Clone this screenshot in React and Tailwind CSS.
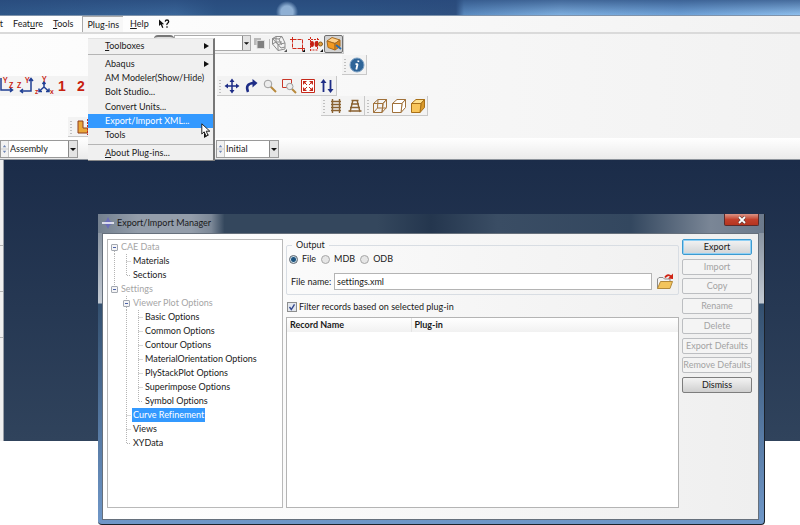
import React from 'react';

const menus = ['Feature', 'Tools', 'Plug-ins', 'Help'];

const pluginItems = [
    { label: 'Toolboxes', hot: 0, sub: true },
    { separator: true },
    { label: 'Abaqus', sub: true },
    { label: 'AM Modeler(Show/Hide)' },
    { label: 'Bolt Studio...' },
    { label: 'Convert Units...' },
    { label: 'Export/Import XML...', active: true },
    { label: 'Tools', sub: true },
    { separator: true },
    { label: 'About Plug-ins...', hot: 0 },
];

// guides: B/E/M = expander, V = vertical line, T = branch, L = last branch, - = blank
const treeRows = [
    { guides: 'B', label: 'CAE Data', muted: true },
    { guides: 'VT', label: 'Materials' },
    { guides: 'VL', label: 'Sections' },
    { guides: 'E', label: 'Settings', muted: true },
    { guides: '-M', label: 'Viewer Plot Options', muted: true },
    { guides: '-VT', label: 'Basic Options' },
    { guides: '-VT', label: 'Common Options' },
    { guides: '-VT', label: 'Contour Options' },
    { guides: '-VT', label: 'MaterialOrientation Options' },
    { guides: '-VT', label: 'PlyStackPlot Options' },
    { guides: '-VT', label: 'Superimpose Options' },
    { guides: '-VL', label: 'Symbol Options' },
    { guides: '-T', label: 'Curve Refinement', selected: true },
    { guides: '-T', label: 'Views' },
    { guides: '-L', label: 'XYData' },
];

const actions = [
    { label: 'Export', primary: true },
    { label: 'Import', disabled: true },
    { label: 'Copy', disabled: true },
    { label: 'Rename', disabled: true },
    { label: 'Delete', disabled: true },
    { label: 'Export Defaults', disabled: true },
    { label: 'Remove Defaults', disabled: true },
    { label: 'Dismiss' },
];

const guidePaths = {
    V: 'M6.5 0V14',
    T: 'M6.5 0V14M6.5 7.5H11',
    L: 'M6.5 0V7.5H11',
    B: 'M6.5 11V14',
    E: 'M6.5 0V4',
    M: 'M6.5 0V4M6.5 11V14',
    '-': '',
};

const Guide = ({ kind }) => (
    <svg className="h-3.5 w-3 shrink-0" viewBox="0 0 12 14" fill="none">
        <path d={guidePaths[kind]} stroke="#b4b4b4" strokeDasharray="1 1" />
        {'BEM'.includes(kind) && (
            <>
                <rect x="3.5" y="4.5" width="6" height="6" rx="0.5" fill="#f4f4f6" stroke="#a3a8b0" />
                <path d="M5 7.5H8" stroke="#4b62a8" />
            </>
        )}
    </svg>
);

const Hot = ({ text, index }) => (
    <span>
        {text.slice(0, index)}
        <u className="underline-offset-1">{text[index]}</u>
        {text.slice(index + 1)}
    </span>
);

const Grip = () => (
    <svg className="h-3.5 w-1 shrink-0" viewBox="0 0 4 14">
        <path d="M2 1V14" stroke="#8d8d8d" strokeWidth="1" strokeDasharray="1 2" />
    </svg>
);

const ToolGroup = ({ children }) => (
    <div className="flex h-5 items-center gap-px border-r border-b border-[#c9c9c9] bg-[#f3f3f3] pl-px">
        <Grip />
        {children}
    </div>
);

const Tool = ({ label, pressed, children }) => (
    <button
        type="button"
        aria-label={label}
        className={
            pressed
                ? 'flex h-[18px] w-[19px] items-center justify-center rounded-xs border border-[#6f6f6f] bg-[#d2d2d2]'
                : 'flex h-[18px] w-[18px] items-center justify-center'
        }
    >
        <svg className="h-4 w-4 shrink-0" viewBox="0 0 16 16" fill="none">
            {children}
        </svg>
    </button>
);

const Cube = ({ front, top, side, stroke, wire }) => (
    <g stroke={stroke} strokeLinejoin="round">
        <path d="M1.5 5.5L6 1.5H14.5L11 5.5Z" fill={top} />
        <path d="M11 5.5L14.5 1.5V9.5L10 14.5Z" fill={side} />
        <path d="M1.5 5.5H11L10 14.5H1.5Z" fill={front} />
        {wire && <path d="M6 1.5L5.5 10H14.5M5.5 10L1.5 14.5" />}
    </g>
);

const Combo = ({ label, value, className }) => (
    <div className={`flex h-[18px] items-stretch border border-[#9a9a9a] bg-white ${className}`}>
        <svg className="h-4 w-2 shrink-0 border-r border-[#c6c6c6] bg-[#f2f2f2]" viewBox="0 0 8 16">
            <path d="M2 6L4 3.5L6 6ZM2 10L4 12.5L6 10Z" fill="#6f86b5" />
            <path d="M0 8H8" stroke="#c6c6c6" />
        </svg>
        <select aria-label={label} className="min-w-0 flex-1 appearance-none bg-white pl-px outline-none">
            <option>{value}</option>
        </select>
        <svg className="h-4 w-[9px] shrink-0 border-l border-[#8a8a8a] bg-[#e4e4e4]" viewBox="0 0 8 16">
            <path d="M1 7H7L4 10Z" fill="#111" />
        </svg>
    </div>
);

const MenuBar = () => (
    <nav className="flex h-[18px] items-center border-b-2 border-[#dadada] bg-linear-to-r from-white to-[#f2f2f2]">
        <button type="button" className="mr-[5px] flex w-[3px] justify-end">t</button>
        {menus.map((name) => (
            <button
                key={name}
                type="button"
                className={
                    name === 'Plug-ins'
                        ? 'mr-0.5 ml-1 h-4 border-t border-l border-[#a9a9a9] bg-[#f7f7f7] px-1'
                        : 'h-4 px-[5px]'
                }
            >
                <Hot text={name} index={name === 'Feature' ? 4 : name === 'Plug-ins' ? 3 : 0} />
            </button>
        ))}
        <button type="button" aria-label="What's this" className="pl-1">
            <svg className="h-2.5 w-3" viewBox="0 0 12 10">
                <path d="M1 0.5V7L2.7 5.6L4.2 9L5.4 8.4L4 5.2H6.2Z" fill="#111" />
                <path d="M7.2 2.7Q7.4 1 9 1T10.7 2.6Q10.7 3.6 9.6 4.3T9 6M9 7.3V8.8" fill="none" stroke="#111" strokeWidth="1.3" />
            </svg>
        </button>
    </nav>
);

const PluginMenu = () => (
    <div role="menu" className="absolute top-[38px] left-[88px] flex h-[123px] w-[127px] flex-col border-t border-r-2 border-b border-t-[#e2e2e2] border-r-[#777] border-b-[#888] bg-[#f0f0f0]">
        {pluginItems.map((item, i) =>
            item.separator ? (
                <hr key={i} className="my-px border-t border-[#b5b5b5]" />
            ) : (
                <button
                    key={item.label}
                    type="button"
                    role="menuitem"
                    className={
                        item.active
                            ? 'flex flex-1 items-center justify-between bg-[#3399ff] pr-1 pl-[17px] text-white'
                            : 'flex flex-1 items-center justify-between pr-1 pl-[17px]'
                    }
                >
                    {item.hot === 0 ? <Hot text={item.label} index={0} /> : <span>{item.label}</span>}
                    {item.sub && (
                        <svg className="h-1.5 w-[5px]" viewBox="0 0 5 6">
                            <path d="M0 0L5 3L0 6Z" fill="#111" />
                        </svg>
                    )}
                </button>
            )
        )}
    </div>
);

const ViewIcons = () => (
    <div className="flex h-5 items-center bg-[#f3f3f3] text-[#c8200e]">
        <svg className="h-5 w-[54px] overflow-visible" viewBox="0 0 54 20" fill="none">
            <g stroke="#1f3f94" strokeWidth="1.5">
                <path d="M1 2V14H12M10 12L12.5 14L10 16" />
                <path d="M31 3V15H21M29 5L31 2.5L33 5M23 13L20.5 15L23 17" />
                <path d="M44 6V11L39.5 15M44 11L48.5 15M42.5 8L44 6L45.5 8M39 12.5V15.5H42M49 12.5V15.5H46" />
            </g>
            <g fill="#c8200e" fontSize="7" fontWeight="700">
                <text x="3" y="7">Y</text>
                <text x="9" y="12">Z</text>
                <text x="17" y="12">Z</text>
                <text x="25" y="7">Y</text>
                <text x="42" y="6">Y</text>
                <text x="35" y="18">z</text>
                <text x="50" y="18">x</text>
            </g>
        </svg>
        <button type="button" className="w-4 text-sm leading-5 font-bold font-['Liberation_Sans',sans-serif]">1</button>
        <button type="button" className="ml-[3px] w-4 text-sm leading-5 font-bold font-['Liberation_Sans',sans-serif]">2</button>
    </div>
);

const Toolbars = () => (
    <div className="flex flex-col bg-linear-to-r from-[#fdfdfd] to-[#f2f2f2]">
        <div className="flex h-[21px] items-start pt-px pl-[154px]">
            <div className="h-[18px] w-5 rounded-t-sm border-t-2 border-[#777] bg-[#ddd]" />
            <div className="flex h-[19px] border-r border-b border-[#c9c9c9] bg-[#f3f3f3]">
                <div className="flex h-4 w-[77px] border border-[#aaa] bg-white">
                    <select aria-label="Field output" className="min-w-0 flex-1 appearance-none bg-white" />
                    <svg className="h-3.5 w-2 border-l border-[#8a8a8a] bg-[#e4e4e4]" viewBox="0 0 8 14">
                        <path d="M1 6H7L4 9Z" fill="#111" />
                    </svg>
                </div>
                <Tool label="Replace selected">
                    <path d="M2 2H9V9H2Z" fill="#b9b9b9" />
                    <path d="M5 4.5H12.5V12.5H5Z" fill="#808080" stroke="#ddd" />
                </Tool>
                <span className="my-1 w-px bg-[#bdbdbd]" />
                <Tool label="Wireframe parts">
                    <path d="M1.5 2.5L5 0.5H11L8 3ZM1.5 2.5V8L7 14.5V8.5ZM7 8.5L14 7V13L7 14.5M11 0.5L14 7M8 3L10.5 9M5 0.5V6L10 12L14 11M1.5 8L5 6H11" stroke="#8c8c8c" />
                    <path d="M16 13V16H13Z" fill="#555" />
                </Tool>
                <Tool label="Select rectangle">
                    <path d="M3.5 3.5H13.5V12.5H3.5Z" stroke="#cf2b1c" strokeDasharray="4 1" />
                    <path d="M1 3.5H6M3.5 1V6M13.5 10V15M11 12.5H16" stroke="#cf2b1c" />
                    <path d="M16 13V16H13Z" fill="#111" />
                </Tool>
                <Tool label="Select entities">
                    <path d="M3.5 1V15M1 3.5H12M10.5 2V14H3" stroke="#cf2b1c" strokeDasharray="2 1" />
                    <ellipse cx="5" cy="8" rx="2" ry="3" fill="#c51f12" />
                    <ellipse cx="9.5" cy="8" rx="2" ry="3" fill="#c51f12" />
                    <circle cx="13.5" cy="8" r="2" fill="#e0a040" stroke="#8a5a1c" />
                    <path d="M16 13V16H13Z" fill="#111" />
                </Tool>
                <Tool label="Select from exterior" pressed>
                    <path d="M1 5L6 1.5L14 4L9 7.5Z" fill="#ffd08a" stroke="#a86b1f" />
                    <path d="M1 5L9 7.5V14L2 11.5Z" fill="#f39a22" stroke="#a86b1f" />
                    <path d="M9 7.5L14 4V10.5L9 14Z" fill="#d98418" stroke="#a86b1f" />
                    <path d="M10 9L15 13" stroke="#2c6cae" strokeWidth="2" />
                </Tool>
            </div>
        </div>
        <div className="flex h-[21px] items-start pl-[342px]">
            <ToolGroup>
                <Tool label="Query information">
                    <circle cx="8" cy="8" r="7" fill="#2f6598" stroke="#7fa2c4" />
                    <path d="M9.5 3.5L9.2 5M8.6 7L7.3 12.5M6.5 7.2H8.8" stroke="#fff" strokeWidth="1.8" />
                </Tool>
            </ToolGroup>
        </div>
        <div className="flex h-5 items-start justify-start">
            <ViewIcons />
            <div className="w-32 shrink-0" />
            <ToolGroup>
                <Tool label="Pan">
                    <path d="M8 2V14M2 8H14" stroke="#1d2c86" strokeWidth="1.5" />
                    <path d="M8 0.5L10.5 4H5.5ZM8 15.5L10.5 12H5.5ZM0.5 8L4 5.5V10.5ZM15.5 8L12 5.5V10.5Z" fill="#1d2c86" />
                </Tool>
                <Tool label="Rotate">
                    <path d="M5 14Q1.5 5.5 11 5" stroke="#1d2c86" strokeWidth="2.5" />
                    <path d="M9.5 1L14.5 5L9.5 9.5Z" fill="#1d2c86" />
                </Tool>
                <Tool label="Magnify">
                    <path d="M8.5 8.5L14 14" stroke="#b98a3c" strokeWidth="2" />
                    <circle cx="6" cy="6" r="3.8" fill="#ececec" stroke="#9d9d9d" />
                </Tool>
                <Tool label="Box zoom">
                    <path d="M1.5 1.5H10.5V9.5H1.5Z" stroke="#c9382a" />
                    <path d="M10.5 10.5L15 15" stroke="#b98a3c" strokeWidth="2" />
                    <circle cx="8.8" cy="8.5" r="3.2" fill="#ececec" stroke="#9d9d9d" />
                </Tool>
                <Tool label="Auto-fit">
                    <path d="M1.5 1.5H14.5V14.5H1.5Z" fill="#fff" stroke="#c5281a" />
                    <path d="M3 3H7L3 7ZM13 3V7L9 3ZM3 13V9L7 13ZM13 13H9L13 9Z" fill="#c5281a" />
                    <path d="M4 4L7 7M12 4L9 7M4 12L7 9M12 12L9 9" stroke="#c5281a" />
                </Tool>
                <Tool label="Cycle views">
                    <path d="M4.5 3V14M11.5 2V13" stroke="#1d2c86" strokeWidth="1.8" />
                    <path d="M4.5 1L7.5 5H1.5ZM11.5 15L14.5 11H8.5Z" fill="#1d2c86" />
                </Tool>
            </ToolGroup>
        </div>
        <div className="flex h-[21px] items-start pl-[321px]">
            <ToolGroup>
                <Tool label="Parallel view">
                    <path d="M4.5 1V15M11.5 1V15M3 3.5H13M3 6.5H13M3 9.5H13M3 12.5H13" stroke="#8a6232" strokeWidth="1.4" />
                </Tool>
                <Tool label="Perspective view">
                    <path d="M6 2L3 14M10 2L13 14M4.5 2.5H11.5M4 6H12M3 9.5H13M1.5 13H14.5" stroke="#8a6232" strokeWidth="1.4" />
                </Tool>
            </ToolGroup>
            <ToolGroup>
                <Tool label="Wireframe"><Cube stroke="#a0713a" front="none" top="none" side="none" wire /></Tool>
                <Tool label="Hidden line"><Cube stroke="#a0713a" front="#fff" top="#fff" side="#fff" /></Tool>
                <Tool label="Shaded"><Cube stroke="#a87018" front="#f8c55a" top="#ffe08c" side="#d99a2b" /></Tool>
            </ToolGroup>
        </div>
        <div className="flex h-[21px] items-start pl-[68px]">
            <ToolGroup>
                <Tool label="Create instance">
                    <path d="M3 2H8V9H13V14H3Z" fill="#eaa83a" stroke="#8c3c1e" />
                    <path d="M12.5 0V16" stroke="#c5281a" strokeDasharray="2 1" />
                </Tool>
            </ToolGroup>
        </div>
    </div>
);

const ContextBar = () => (
    <div className="flex h-[22px] items-center border-b border-[#8e949c] bg-linear-to-b from-white to-[#ebebeb]">
        <Combo label="Module" value="Assembly" className="w-[78px]" />
        <div className="w-[138px] shrink-0" />
        <Combo label="Step" value="Initial" className="w-[63px]" />
    </div>
);

const SettingsTree = () => (
    <ul className="h-[269px] w-[176px] shrink-0 border border-[#b9b9b9] bg-white">
        {treeRows.map((row) => (
            <li key={row.label} className="flex h-3.5 items-center">
                {row.guides.split('').map((kind, i) => (
                    <Guide key={i} kind={kind} />
                ))}
                <span
                    className={
                        row.selected
                            ? 'h-3.5 bg-[#3399ff] px-px leading-3.5 text-white'
                            : row.muted
                              ? 'px-px text-[#a5a5a5]'
                              : 'px-px'
                    }
                >
                    {row.label}
                </span>
            </li>
        ))}
    </ul>
);

const Radio = ({ label, checked }) => (
    <label className="flex items-center gap-1">
        <input
            type="radio"
            name="output"
            defaultChecked={checked}
            className="h-[9px] w-[9px] appearance-none rounded-full border border-[#a6a6a6] bg-[#e6e6e6] checked:border-[#5c6670] checked:bg-[radial-gradient(circle,#1d5480_0_2px,#c9dbe6_3px)]"
        />
        {label}
    </label>
);

const OutputForm = () => (
    <div className="flex min-w-0 flex-1 flex-col">
        <fieldset className="h-[56px] rounded-xs border border-[#d8dde3] px-1">
            <legend className="ml-px px-1 leading-3">Output</legend>
            <div className="-ml-0.5 flex h-4 items-center gap-[5px]">
                <Radio label="File" checked />
                <Radio label="MDB" />
                <Radio label="ODB" />
            </div>
            <div className="mt-1.5 flex items-center">
                <label htmlFor="file-name" className="w-[43px] shrink-0">File name:</label>
                <input
                    id="file-name"
                    defaultValue="settings.xml"
                    className="h-[17px] min-w-0 flex-1 border border-[#b4b4b4] bg-white px-0.5 outline-none"
                />
                <button type="button" aria-label="Browse" className="ml-1">
                    <svg className="h-[17px] w-[18px]" viewBox="0 0 18 17" fill="none">
                        <path d="M1.5 15.5V6L3 4.5H7L8.5 6H14V9" fill="#f4f4f4" stroke="#8b8b8b" />
                        <path d="M1.5 15.5L4.5 8.5H16.5L14 15.5Z" fill="#f3c45c" stroke="#b3893a" />
                        <path d="M9 4.5Q12 0.5 15 3.5" stroke="#cf2414" strokeWidth="1.8" />
                        <path d="M17 0.5V6L12 5.5Z" fill="#cf2414" />
                    </svg>
                </button>
            </div>
        </fieldset>
        <label className="mt-1.5 flex h-3 items-center gap-0.5 pl-px">
            <span className="grid">
                <input
                    type="checkbox"
                    defaultChecked
                    className="col-start-1 row-start-1 h-2.5 w-2.5 appearance-none border border-[#8e8f8f] bg-[#e3e7ee]"
                />
                <svg className="pointer-events-none col-start-1 row-start-1 h-2.5 w-2.5" viewBox="0 0 10 10" fill="none">
                    <path d="M2.5 5L4.3 7.5L7.5 2.3" stroke="#34498f" strokeWidth="1.4" />
                </svg>
            </span>
            Filter records based on selected plug-in
        </label>
        <div className="mt-1 flex-1 border border-[#b4b4b4] bg-white">
            <table className="w-full table-fixed text-left">
                <thead>
                    <tr className="h-3.5 bg-linear-to-b from-white to-[#f1f1f1]">
                        <th className="w-[124px] border-r border-[#e4e4e4] pl-[3px]">Record Name</th>
                        <th className="pl-[3px]">Plug-in</th>
                    </tr>
                </thead>
                <tbody />
            </table>
        </div>
    </div>
);

const ActionButtons = () => (
    <div className="flex h-[154px] w-[70px] shrink-0 flex-col justify-between">
        {actions.map(({ label, primary, disabled }) => (
            <button
                key={label}
                type="button"
                disabled={disabled}
                className={
                    primary
                        ? 'h-4 rounded-xs border border-[#3c9ad0] bg-linear-to-b from-[#f3f3f3] to-[#d2d4d6] leading-3 whitespace-nowrap ring-1 ring-[#8fd0f5] ring-inset'
                        : disabled
                          ? 'h-4 rounded-xs border border-[#bcbec1] bg-[#f4f4f4] leading-3 whitespace-nowrap text-[#a3a3a3]'
                          : 'h-4 rounded-xs border border-[#7d7d7d] bg-linear-to-b from-[#f3f3f3] to-[#cfcfcf] leading-3 whitespace-nowrap'
                }
            >
                {label}
            </button>
        ))}
    </div>
);

const ExportImportDialog = () => (
    <section
        role="dialog"
        aria-label="Export/Import Manager"
        className="absolute top-[214px] right-[35px] left-[98px] rounded-b-sm border-r border-b border-[#1c222b] bg-[linear-gradient(180deg,#7b8795_0,#c3cad3_89px,#34506f_90px,#6f97c8_100%)] pr-[5px] pb-1 pl-1"
    >
        <header className="-mr-[5px] -ml-1 flex h-[19px] items-start justify-between bg-[linear-gradient(90deg,#73808f_0,#939daa_6%,#939daa_14%,#7c8897_17%,#34475d_19%,#34475d_42%,#24364e_50%,#3a4d64_60%,#33475f_80%,#7a8696_92%,#6c7a8c_100%)]">
            <h1 className="flex h-[18px] items-center gap-[3px] pl-1">
                <svg className="h-3 w-3" viewBox="0 0 12 12">
                    <path d="M6 0L8 4L12 6L8 8L6 12L4 8L0 6L4 4Z" fill="#6a6cb8" />
                    <path d="M0 6H12" stroke="#fff" strokeWidth="1.5" />
                </svg>
                Export/Import Manager
            </h1>
            <button
                type="button"
                aria-label="Close"
                className="mr-[5px] flex h-3 w-[35px] items-center justify-center rounded-b-xs border border-t-0 border-[#5c2a2a] bg-linear-to-b from-[#d99385] via-[#c2402c] to-[#b5341f]"
            >
                <svg className="h-2 w-2" viewBox="0 0 8 8">
                    <path d="M1 1L7 7M7 1L1 7" stroke="#4c3a3a" strokeWidth="3" />
                    <path d="M1 1L7 7M7 1L1 7" stroke="#fff" strokeWidth="1.8" />
                </svg>
            </button>
        </header>
        <div className="flex gap-[3px] border border-[#66707c] bg-linear-to-r from-white to-[#efefef] pt-[5px] pr-1.5 pb-[11px] pl-1">
            <SettingsTree />
            <OutputForm />
            <ActionButtons />
        </div>
    </section>
);

const App = () => (
    <div className="relative min-h-screen overflow-hidden bg-white font-['Lato','Noto_Sans',sans-serif] text-[9px] leading-3 text-[#1a1a1a] [font-variant-ligatures:none]">
        <div className="h-4 border-b border-[#7f93ab] bg-[linear-gradient(90deg,#2f5788_0,#3a6699_22%,#2d5586_27%,#2d5586_44%,#2f5080_57%,#5b8bc0_58%,#7fb0e0_70%,#6fa2d8_85%,#8fc0ee_100%)]">
            <div className="h-full bg-[radial-gradient(circle_at_287px_12px,#8fb0d4_0_6px,transparent_11px),linear-gradient(180deg,#27487ab3,transparent)]" />
        </div>
        <MenuBar />
        <Toolbars />
        <ContextBar />
        <div className="flex h-[281px]">
            <div className="flex w-1 shrink-0 flex-col border-r border-[#9aa0a8] bg-[#efefef] pt-[85px]">
                <hr className="mb-[45px] border-[#b5b5b5]" />
                <hr className="mb-[45px] border-[#b5b5b5]" />
                <hr className="border-[#b5b5b5]" />
            </div>
            <main className="flex-1 bg-linear-to-b from-[#1b2c49] to-[#30435c]" />
        </div>
        <PluginMenu />
        <svg className="pointer-events-none absolute top-[123px] left-[201px] h-3.5 w-2.5" viewBox="0 0 10 14">
            <path d="M0.8 0.8V11L3.2 8.8L5 13L7 12.2L5.2 8.2H8.8Z" fill="#fff" stroke="#222" />
        </svg>
        <ExportImportDialog />
    </div>
);

export default App;
